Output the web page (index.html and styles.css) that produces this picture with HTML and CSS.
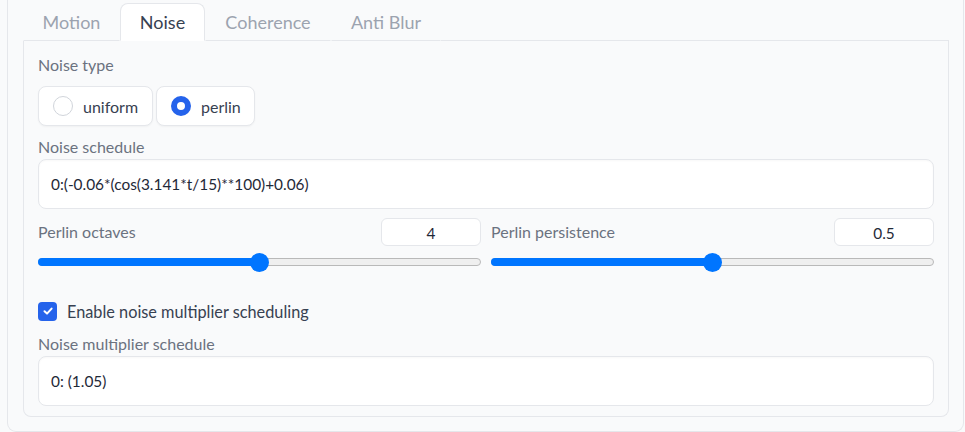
FILE: index.html
```html
<!DOCTYPE html>
<html>
<head>
<meta charset="utf-8">
<link rel="stylesheet" href="styles.css">
</head>
<body>
<div class="block">
  <div class="tabs">
    <div class="tab t-motion">Motion</div>
    <div class="tab active t-noise">Noise</div>
    <div class="tab t-coh">Coherence</div>
    <div class="tab t-anti">Anti Blur</div>
    <div class="tab-fill"></div>
  </div>
  <div class="panel">
    <div class="label label-first">Noise type</div>
    <div class="radios">
      <label class="radio">
        <span class="circle"></span>
        <span>uniform</span>
      </label>
      <label class="radio">
        <span class="circle checked"></span>
        <span>perlin</span>
      </label>
    </div>

    <div class="label">Noise schedule</div>
    <div class="textbox">0:(-0.06*(cos(3.141*t/15)**100)+0.06)</div>

    <div class="sliders">
      <div class="slider-col">
        <div class="slider-head">
          <span class="label">Perlin octaves</span>
          <div class="num">4</div>
        </div>
        <div class="range">
          <div class="fill" style="width:50%"></div>
          <div class="thumb" style="left:50%"></div>
        </div>
      </div>
      <div class="slider-col">
        <div class="slider-head">
          <span class="label">Perlin persistence</span>
          <div class="num">0.5</div>
        </div>
        <div class="range">
          <div class="fill" style="width:50%"></div>
          <div class="thumb" style="left:50%"></div>
        </div>
      </div>
    </div>

    <label class="check">
      <span class="box">
        <svg width="12" height="12" viewBox="0 0 12 12"><path d="M2.5 6.3 L5 8.6 L9.6 3.6" fill="none" stroke="#fff" stroke-width="2" stroke-linecap="round" stroke-linejoin="round"/></svg>
      </span>
      <span>Enable noise multiplier scheduling</span>
    </label>

    <div class="label">Noise multiplier schedule</div>
    <div class="textbox">0: (1.05)</div>
  </div>
</div>
</body>
</html>
```

FILE: styles.css
```css
* { box-sizing: border-box; }
html, body {
  margin: 0;
  padding: 0;
  background: #f9fafb;
  font-family: "Lato", "Noto Sans", sans-serif;
  color: #374151;
}
.block {
  margin-left: 7px;
  width: 957px;
  height: 432px;
  border: 1px solid #e5e7eb;
  border-top: 0;
  border-radius: 0 0 9px 9px;
  padding: 3px 14px 0 15px;
  background: #f9fafb;
}
.tabs {
  display: flex;
  height: 38px;
  align-items: stretch;
}
.tab {
  display: flex;
  align-items: center;
  justify-content: center;
  font-size: 18px;
  color: #9ca3af;
  border: 1px solid transparent;
  border-bottom: 1px solid #e5e7eb;
  border-radius: 8px 8px 0 0;
  padding-bottom: 1px;
}
.t-motion { width: 97px; }
.t-noise { width: 85px; }
.t-coh { width: 126px; }
.t-anti { width: 110px; }
.tab.active {
  background: #ffffff;
  color: #374151;
  border-color: #e5e7eb;
  border-bottom-color: #ffffff;
}
.tab-fill {
  flex: 1;
  border-bottom: 1px solid #e5e7eb;
}
.panel {
  height: 376px;
  border: 1px solid #e5e7eb;
  border-top: 0;
  border-radius: 0 0 8px 8px;
  padding: 14px 14px 0 14px;
  display: flex;
  flex-direction: column;
}
.label {
  font-size: 16px;
  line-height: 20px;
  color: #6b7280;
}
.radios {
  display: flex;
  gap: 3px;
  margin-top: 11px;
  margin-bottom: 11px;
}
.radio {
  display: flex;
  align-items: center;
  height: 40px;
  border: 1px solid #e5e7eb;
  border-radius: 8px;
  background: #fff;
  box-shadow: 0 1px 2px rgba(0,0,0,0.04);
  padding: 0 15px 0 14px;
  gap: 10px;
  font-size: 16px;
  color: #374151;
}
.radio:first-child { width: 115px; }
.radio:nth-child(2) { width: 99px; }
.circle {
  width: 20px;
  height: 20px;
  border-radius: 50%;
  border: 1px solid #d1d5db;
  background: #fff;
  flex: none;
}
.circle.checked {
  border: 6px solid #2563eb;
  background: #fff;
}
.textbox {
  margin-top: 2px;
  height: 50px;
  background: #fff;
  border: 1px solid #e5e7eb;
  border-radius: 8px;
  box-shadow: inset 0 1px 2px rgba(0,0,0,0.03);
  padding: 0 12px;
  display: flex;
  align-items: center;
  font-size: 15.4px;
  color: #1f2937;
}
.sliders {
  display: flex;
  gap: 10px;
  margin-top: 9px;
}
.slider-col {
  flex: 1;
  display: flex;
  flex-direction: column;
}
.slider-head {
  display: flex;
  justify-content: space-between;
  align-items: center;
  height: 28px;
}
.num {
  width: 100px;
  height: 28px;
  border: 1px solid #e5e7eb;
  border-radius: 6px;
  background: #fff;
  display: flex;
  align-items: center;
  justify-content: center;
  font-size: 15.4px;
  color: #1f2937;
  padding-top: 2px;
}
.range {
  position: relative;
  margin-top: 12px;
  height: 8px;
  border: 1px solid #b9b9b9;
  border-radius: 4px;
  background: #efefef;
}
.fill {
  position: absolute;
  left: -1px;
  top: -1px;
  height: 8px;
  background: #0075ff;
  border-radius: 4px 0 0 4px;
}
.thumb {
  position: absolute;
  top: 50%;
  width: 19px;
  height: 19px;
  margin-left: -9.5px;
  margin-top: -9.5px;
  border-radius: 50%;
  background: #0075ff;
}
.check {
  display: flex;
  align-items: center;
  gap: 10px;
  margin-top: 35px;
  font-size: 16.3px;
  color: #374151;
  height: 20px;
}
.box {
  width: 19px;
  height: 19px;
  border-radius: 4px;
  background: #2563eb;
  display: flex;
  align-items: center;
  justify-content: center;
}
.check + .label {
  margin-top: 13px;
}
```
